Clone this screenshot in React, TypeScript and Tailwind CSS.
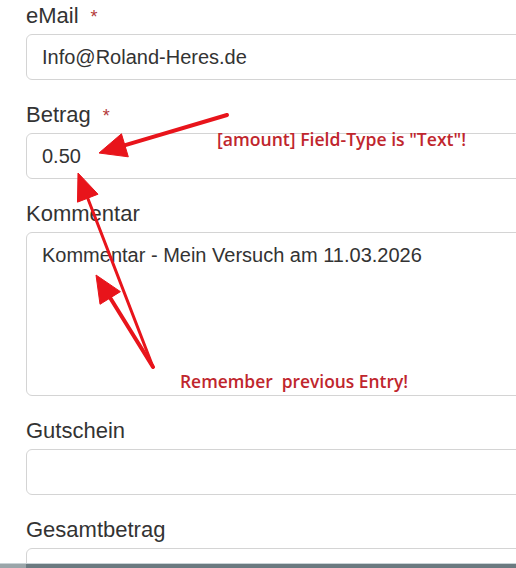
import React from "react";

const fieldClass =
	"block w-[540px] h-[46px] rounded-[6px] border border-[#d4d4d4] bg-white pl-[15px] text-[20px] text-[#333] outline-none";

const Label = ({ text, required }: { text: string; required?: boolean }) => (
	<label className="block h-[26px] leading-[26px] text-[22px] text-[#333] mb-[5px]">
		{text}
		{required && <span className="ml-3 text-[18px] text-[#b33a3a]">*</span>}
	</label>
);

const Arrow = ({
	tail,
	tip,
	width = 4,
	head = 27,
	half = 12,
}: {
	tail: [number, number];
	tip: [number, number];
	width?: number;
	head?: number;
	half?: number;
}) => {
	const dx = tip[0] - tail[0];
	const dy = tip[1] - tail[1];
	const len = Math.hypot(dx, dy);
	const ux = dx / len;
	const uy = dy / len;
	const bx = tip[0] - ux * head;
	const by = tip[1] - uy * head;
	const px = -uy * half;
	const py = ux * half;
	return (
		<g fill="#e8141b" stroke="#e8141b">
			<line
				x1={tail[0]}
				y1={tail[1]}
				x2={bx + ux * 4}
				y2={by + uy * 4}
				strokeWidth={width}
				strokeLinecap="round"
			/>
			<polygon
				points={`${tip[0]},${tip[1]} ${bx + px},${by + py} ${bx - px},${by - py}`}
				strokeWidth={1}
				strokeLinejoin="round"
			/>
		</g>
	);
};

const App = () => {
	return (
		<div
			className="relative w-[516px] h-[568px] overflow-hidden bg-white flex flex-col"
			style={{ fontFamily: '"Liberation Sans", Arial, sans-serif' }}
		>
			<div className="flex-1 overflow-hidden pl-[26px] pt-[3px]">
				<Label text="eMail" required />
				<input readOnly value="Info@Roland-Heres.de" className={fieldClass} />

				<div className="mt-[22px]">
					<Label text="Betrag" required />
					<input readOnly value="0.50" className={fieldClass} />
				</div>

				<div className="mt-[22px]">
					<Label text="Kommentar" />
					<textarea
						readOnly
						value="Kommentar - Mein Versuch am 11.03.2026"
						className="block w-[540px] h-[164px] resize-none rounded-[6px] border border-[#d4d4d4] bg-white pl-[15px] pt-[7px] text-[20px] leading-[30px] text-[#333] outline-none"
					/>
				</div>

				<div className="mt-[22px]">
					<Label text="Gutschein" />
					<input readOnly value="" className={fieldClass} />
				</div>

				<div className="mt-[22px]">
					<Label text="Gesamtbetrag" />
					<input readOnly value="" className={fieldClass} />
				</div>
			</div>

			{/* window edge at the bottom */}
			<div className="flex h-[5px] border-t border-[#c9d3d6]">
				<div className="w-[26px] bg-[#9aa5a9]" />
				<div className="flex-1 bg-[#6b7a80]" />
			</div>

			{/* annotations drawn over the form */}
			<svg
				className="absolute left-0 top-0 pointer-events-none"
				width={516}
				height={568}
				viewBox="0 0 516 568"
			>
				<Arrow tail={[227, 115]} tip={[99, 153]} width={4} />
				<Arrow tail={[153, 367]} tip={[78, 173]} width={3} half={11} />
				<Arrow tail={[153, 367]} tip={[96, 275]} width={4} />
			</svg>
			<span
				className="absolute left-[217px] top-[129px] text-[17.6px] font-semibold leading-[20px] text-[#c0262d] whitespace-pre"
				style={{ fontFamily: '"Open Sans", sans-serif' }}
			>
				[amount] Field-Type is "Text"!
			</span>
			<span
				className="absolute left-[180px] top-[371px] text-[17.4px] font-semibold leading-[20px] text-[#c0262d] whitespace-pre"
				style={{ fontFamily: '"Open Sans", sans-serif' }}
			>
				Remember  previous Entry!
			</span>
		</div>
	);
};

export default App;
